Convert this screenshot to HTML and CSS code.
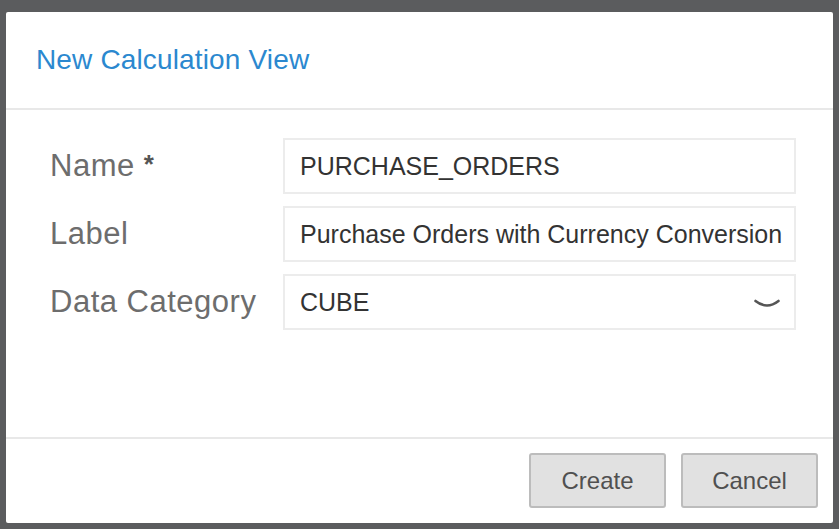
FILE: index.html
```html
<!DOCTYPE html>
<html lang="en">
<head>
<meta charset="utf-8">
<title>New Calculation View</title>
<link rel="stylesheet" href="styles.css">
</head>
<body>
<div class="dialog">
  <div class="header"><h1 class="title">New Calculation View</h1></div>
  <div class="content">
    <label class="label" for="f-name">Name <span class="req">*</span></label>
    <input class="field" id="f-name" type="text" value="PURCHASE_ORDERS" readonly>
    <label class="label" for="f-label">Label</label>
    <input class="field" id="f-label" type="text" value="Purchase Orders with Currency Conversion" readonly>
    <span class="label">Data Category</span>
    <div class="field select">
      <span class="select-value">CUBE</span>
      <svg class="chevron" width="26" height="11" viewBox="0 0 26 11"><path d="M1.5 2 Q13 11 24.5 2" fill="none" stroke="#555" stroke-width="2.6" stroke-linecap="round"/></svg>
    </div>
  </div>
  <div class="footer">
    <button class="btn">Create</button>
    <button class="btn">Cancel</button>
  </div>
</div>
</body>
</html>
```
FILE: styles.css
```css
html, body {
  margin: 0;
  padding: 0;
}
body {
  background: #5b5c5e;
  width: 839px;
  height: 529px;
  overflow: hidden;
  font-family: "Liberation Sans", Arial, sans-serif;
}
.dialog {
  margin: 12px 6px 0 6px;
  width: 827px;
  height: 511px;
  background: #fff;
  border-radius: 2px;
  display: flex;
  flex-direction: column;
  box-sizing: border-box;
}
.header {
  height: 96px;
  flex: none;
  display: flex;
  align-items: center;
  padding-left: 30px;
  border-bottom: 2px solid #e8e8e8;
}
.title {
  margin: 0;
  font-weight: normal;
  font-size: 28px;
  letter-spacing: 0.15px;
  color: #2b88cf;
}
.content {
  flex: 1;
  display: grid;
  grid-template-columns: 233px 513px;
  grid-auto-rows: 56px;
  row-gap: 12px;
  padding: 28px 0 0 44px;
  align-items: center;
}
.label {
  font-size: 31px;
  color: #6d6d6d;
  letter-spacing: 0.5px;
}
.req {
  color: #555;
  font-weight: bold;
  font-size: 26px;
  vertical-align: 3px;
}
.field {
  box-sizing: border-box;
  height: 56px;
  width: 513px;
  border: 2px solid #ececec;
  padding: 0 0 0 15px;
  font-family: "Liberation Sans", Arial, sans-serif;
  font-size: 25px;
  color: #333;
  background: #fff;
  outline: none;
  margin: 0;
}
.select {
  display: flex;
  align-items: center;
  justify-content: space-between;
  padding-right: 14px;
}
.chevron {
  display: block;
  margin-top: 4px;
}
.footer {
  flex: none;
  height: 86px;
  box-sizing: border-box;
  border-top: 2px solid #e8e8e8;
  display: flex;
  justify-content: flex-end;
  align-items: flex-start;
  gap: 15px;
  padding: 14px 15px 0 0;
}
.btn {
  width: 137px;
  height: 55px;
  box-sizing: border-box;
  background: #e1e1e1;
  border: 2px solid #bcbcbc;
  border-radius: 3px;
  font-family: "Liberation Sans", Arial, sans-serif;
  font-size: 24px;
  color: #505050;
  padding: 0;
}
```
